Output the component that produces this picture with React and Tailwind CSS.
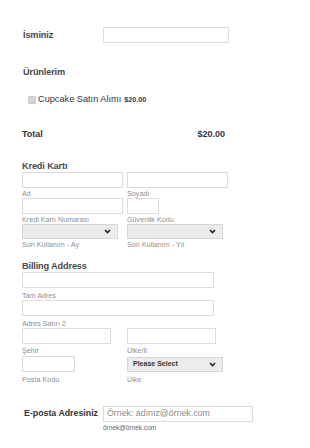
const field = 'block h-[16px] border border-[#dcdcdc] bg-white'
const sub = 'text-[7.2px] leading-[9px] text-[#8f8f8f] whitespace-nowrap'
const head = 'text-[9.2px] font-bold leading-[11px] text-[#4a4a4a] tracking-[-0.15px] whitespace-nowrap'

function Select({ w, children }) {
  return (
    <div className={`flex items-center justify-between h-[15px] border border-[#d6d6d6] bg-[#ececec] pl-[5px] pr-[6px] ${w}`}>
      <span className="text-[7px] font-bold text-[#333]">{children}</span>
      <svg width="7" height="5" viewBox="0 0 7 5">
        <path d="M1 1l2.5 2.5L6 1" fill="none" stroke="#222" strokeWidth="1.6" />
      </svg>
    </div>
  )
}

export default function App() {
  return (
    <div className="w-[310px] h-[448px] bg-white font-['Liberation_Sans',Arial,sans-serif] text-[#444] pl-[22px] pt-[27px]">
      {/* name */}
      <div className="flex items-center h-[16px]">
        <span className={`w-[81px] pl-[1px] ${head}`}>İsminiz</span>
        <div className={`${field} w-[126px]`} />
      </div>

      {/* products */}
      <div className={`mt-[24px] pl-[1px] ${head}`}>Ürünlerim</div>
      <div className="mt-[16px] pl-[6px] flex items-center h-[12px]">
        <div className="w-[8px] h-[8px] rounded-[1px] bg-[#cfcfcf] flex items-center justify-center">
          <svg width="6" height="6" viewBox="0 0 6 6">
            <path d="M1 3l1.4 1.4L5 1.6" fill="none" stroke="#eee" strokeWidth="1" />
          </svg>
        </div>
        <span className="ml-[2px] text-[9.2px] text-[#333]">Cupcake Satın Alımı</span>
        <span className="ml-[3px] text-[7.2px] font-bold text-[#2f3b55]">$20.00</span>
      </div>

      <div className="mt-[23px] flex w-[203px] justify-between text-[9px] font-bold text-[#333] leading-[11px]">
        <span>Total</span>
        <span className="text-[#2f3648]">$20.00</span>
      </div>

      {/* card */}
      <div className={`mt-[21px] ${head}`}>Kredi Kartı</div>
      <div className="grid grid-cols-[105px_101px]">
        <div className={`${field} w-[101px]`} />
        <div className={`${field} w-[101px]`} />
        <div className={sub + ' h-[10px] pt-[1px]'}>Ad</div>
        <div className={sub + ' h-[10px] pt-[1px]'}>Soyadı</div>
        <div className={`${field} w-[101px]`} />
        <div className={`${field} w-[32px]`} />
        <div className={sub + ' h-[10px] pt-[1px]'}>Kredi Kartı Numarası</div>
        <div className={sub + ' h-[10px] pt-[1px]'}>Güvenlik Kodu</div>
        <Select w="w-[96px]" />
        <Select w="w-[96px]" />
        <div className={sub + ' h-[10px] pt-[1px]'}>Son Kullanım - Ay</div>
        <div className={sub + ' h-[10px] pt-[1px]'}>Son Kullanım - Yıl</div>
      </div>

      {/* billing */}
      <div className={`mt-[12px] ${head}`}>Billing Address</div>
      <div>
        <div className={`${field} w-[192px]`} />
        <div className={sub + ' h-[12px] pt-[3px]'}>Tam Adres</div>
        <div className={`${field} w-[192px]`} />
        <div className={sub + ' h-[12px] pt-[3px]'}>Adres Satırı 2</div>
        <div className="grid grid-cols-[105px_96px]">
          <div className={`${field} w-[89px]`} />
          <div className={`${field} w-[89px]`} />
          <div className={sub + ' h-[12px] pt-[2px]'}>Şehir</div>
          <div className={sub + ' h-[12px] pt-[2px]'}>Ülke/İl</div>
          <div className={`${field} w-[53px]`} />
          <div className="pt-[1px]"><Select w="w-[96px]">Please Select</Select></div>
          <div className={sub + ' pt-[3px]'}>Posta Kodu</div>
          <div className={sub + ' pt-[3px]'}>Ülke</div>
        </div>
      </div>

      {/* email */}
      <div className="mt-[22px] flex items-center h-[16px]">
        <span className="w-[81px] pl-[2px] text-[8.8px] font-bold text-[#333] whitespace-nowrap">E-posta Adresiniz</span>
        <div className="h-[16px] w-[150px] border border-[#dcdcdc] bg-white pl-[3px] flex items-center text-[8.8px] text-[#8a8a8a] whitespace-nowrap">
          Örnek: adınız@örnek.com
        </div>
      </div>
      <div className="ml-[81px] mt-[1px] text-[6.5px] text-[#666]">örnek@örnek.com</div>
    </div>
  )
}
